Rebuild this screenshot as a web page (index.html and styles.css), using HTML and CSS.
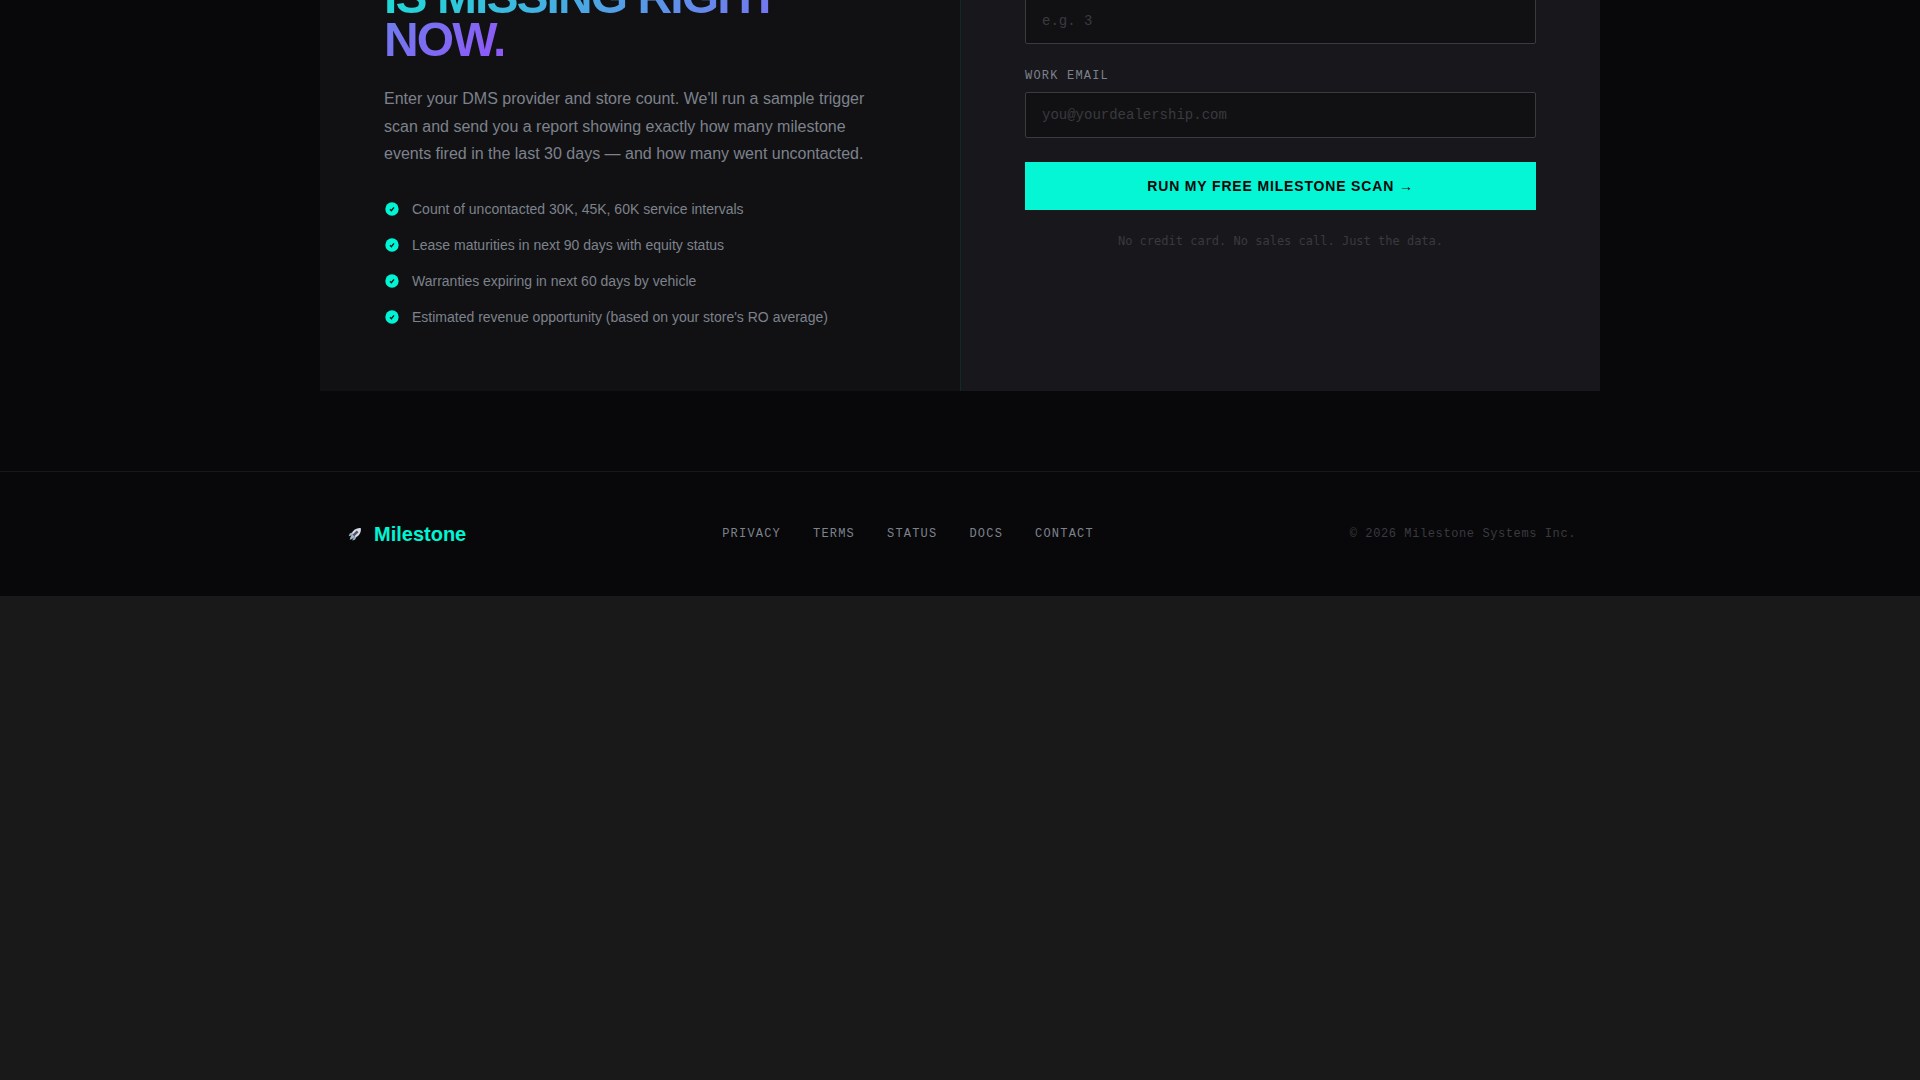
FILE: index.html
```html
<!DOCTYPE html>
<html lang="en">
<head>
  <meta charset="UTF-8">
  <title>Milestone</title>
  <meta name="viewport" content="width=device-width, initial-scale=1">
  <link rel="stylesheet" href="styles.css">
</head>
<body>
  <main class="scan-section">
    <div class="scan-card">
      <div class="scan-info">
        <h2><span class="gradient-text">IS MISSING RIGHT NOW.</span></h2>
        <p class="lead">Enter your DMS provider and store count. We'll run a sample trigger scan and send you a report showing exactly how many milestone events fired in the last 30 days — and how many went uncontacted.</p>
        <ul class="check-list">
          <li><svg class="check" viewBox="0 0 24 24"><circle cx="12" cy="12" r="10"/><path d="M9 12.5l2 2 4-5"/></svg>Count of uncontacted 30K, 45K, 60K service intervals</li>
          <li><svg class="check" viewBox="0 0 24 24"><circle cx="12" cy="12" r="10"/><path d="M9 12.5l2 2 4-5"/></svg>Lease maturities in next 90 days with equity status</li>
          <li><svg class="check" viewBox="0 0 24 24"><circle cx="12" cy="12" r="10"/><path d="M9 12.5l2 2 4-5"/></svg>Warranties expiring in next 60 days by vehicle</li>
          <li><svg class="check" viewBox="0 0 24 24"><circle cx="12" cy="12" r="10"/><path d="M9 12.5l2 2 4-5"/></svg>Estimated revenue opportunity (based on your store's RO average)</li>
        </ul>
      </div>

      <form class="scan-form">
        <input type="text" id="stores" aria-label="Store count" placeholder="e.g. 3">
        <label for="email">WORK EMAIL</label>
        <input type="email" id="email" placeholder="you@yourdealership.com">
        <button type="button">RUN MY FREE MILESTONE SCAN →</button>
        <p class="note">No credit card. No sales call. Just the data.</p>
      </form>
    </div>
  </main>

  <footer>
    <div class="footer-inner">
      <a class="brand" href="#">
        <svg class="rocket" viewBox="0 0 24 24">
          <path d="M22 2C15 1 9 5 6 11l7 7c6-3 10-9 9-16z" fill="#d3dde2"/>
          <path d="M8 9L3 11l-2 5 6-2zM15 16l-3 6-5 1 3-5z" fill="#8fb5c4"/>
          <path d="M7 12l5 5-6 4-3 1 1-4z" fill="#a9b4bd"/>
          <path d="M15 6l3 3-7 7-3-3z" fill="#5d4d72"/>
        </svg>
        Milestone
      </a>
      <nav>
        <a href="#">PRIVACY</a>
        <a href="#">TERMS</a>
        <a href="#">STATUS</a>
        <a href="#">DOCS</a>
        <a href="#">CONTACT</a>
      </nav>
      <span class="copyright">© 2026 Milestone Systems Inc.</span>
    </div>
  </footer>
</body>
</html>
```

FILE: styles.css
```css
* {
  box-sizing: border-box;
  margin: 0;
  padding: 0;
}

body {
  background: #191919;
  color: #7d828c;
  font-family: "Liberation Sans", Arial, sans-serif;
  font-size: 16px;
}

.scan-section {
  background: #08080a;
  padding-bottom: 80px;
  overflow: hidden;
}

/* the card runs off the top edge of the window */
.scan-card {
  max-width: 1280px;
  margin: -89px auto 0;
  display: grid;
  grid-template-columns: 1fr 1fr;
}

.scan-info {
  background: #111113;
  padding: 64px 64px 62px;
}

h2 {
  font-size: 48px;
  font-weight: 700;
  line-height: 0.9;
  letter-spacing: -0.04em;
  margin-bottom: 24px;
}

.gradient-text {
  background: linear-gradient(135deg, #18e2d4, #8b5cf6 94%);
  -webkit-background-clip: text;
  background-clip: text;
  color: transparent;
}

.lead {
  line-height: 1.7;
  margin-bottom: 30px;
}

.check-list {
  list-style: none;
  display: flex;
  flex-direction: column;
  gap: 12px;
}

.check-list li {
  display: flex;
  align-items: center;
  gap: 12px;
  font-size: 14px;
  line-height: 24px;
}

.check {
  width: 16px;
  height: 16px;
}

.check circle {
  fill: #00f5d4;
}

.check path {
  fill: none;
  stroke: #111113;
  stroke-width: 2;
}

.scan-form {
  background: #18171c;
  border-left: 1px solid #10292a;
  padding: 87px 64px 64px;
}

.scan-form label {
  display: block;
  font-family: "Liberation Mono", monospace;
  font-size: 12px;
  letter-spacing: 0.1em;
  line-height: 16px;
  margin-bottom: 8px;
}

.scan-form input {
  display: block;
  width: 100%;
  height: 46px;
  padding: 0 16px;
  margin-bottom: 24px;
  background: #111113;
  border: 1px solid #3a3a3f;
  border-radius: 2px;
  color: #d0d0d5;
  font-family: "Liberation Mono", monospace;
  font-size: 14px;
}

.scan-form input::placeholder {
  color: #3a3a3f;
}

.scan-form button {
  display: block;
  width: 100%;
  height: 48px;
  background: #05f6d4;
  border: none;
  color: #08080a;
  font-family: "Liberation Sans", Arial, sans-serif;
  font-size: 14px;
  font-weight: 700;
  letter-spacing: 0.06em;
  cursor: pointer;
}

.note {
  margin-top: 24px;
  text-align: center;
  color: #3a3a3f;
  font-family: "DejaVu Sans Mono", monospace;
  font-size: 12px;
}

footer {
  background: #08080a;
  border-top: 1px solid #18181b;
  padding: 48px 0;
}

.footer-inner {
  max-width: 1280px;
  margin: 0 auto;
  padding: 0 24px;
  display: flex;
  justify-content: space-between;
  align-items: center;
}

.brand {
  display: flex;
  align-items: center;
  gap: 8px;
  color: #00f5d4;
  font-size: 20px;
  font-weight: 700;
  line-height: 28px;
  text-decoration: none;
}

.rocket {
  width: 22px;
  height: 14px;
}

nav {
  display: flex;
  gap: 32px;
}

nav a {
  color: #7d828c;
  font-family: "Liberation Mono", monospace;
  font-size: 12px;
  letter-spacing: 0.1em;
  text-decoration: none;
}

.copyright {
  color: #3a3a3f;
  font-family: "Liberation Mono", monospace;
  font-size: 12px;
  letter-spacing: 0.05em;
}
```
